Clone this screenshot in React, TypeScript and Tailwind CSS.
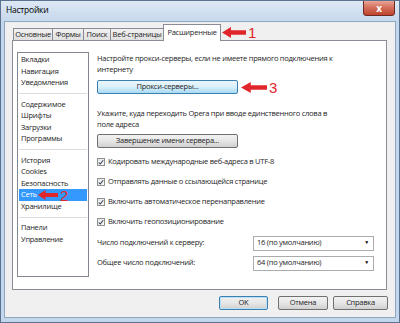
import React from 'react';

const listGroups: string[][] = [
    ['Вкладки', 'Навигация', 'Уведомления'],
    ['Содержимое', 'Шрифты', 'Загрузки', 'Программы'],
    ['История', 'Cookies', 'Безопасность', 'Сеть', 'Хранилище'],
    ['Панели', 'Управление'],
];

const tabs = [
    { label: 'Основные', w: 'w-[40px]' },
    { label: 'Формы', w: 'w-[32px]' },
    { label: 'Поиск', w: 'w-[28px]' },
    { label: 'Веб-страницы', w: 'w-[54px]' },
];

const checks = [
    'Кодировать международные веб-адреса в UTF-8',
    'Отправлять данные о ссылающейся странице',
    'Включить автоматическое перенаправление',
    'Включить геопозиционирование',
];

const Arrow = ({ className }: { className: string }) => (
    <svg className={className} viewBox="0 0 24 12" preserveAspectRatio="none">
        <path d="M0 6 L9 0 L9 3.5 L24 3.5 L24 8.5 L9 8.5 L9 12 Z" fill="#e1262b" />
    </svg>
);

const Checkbox = () => (
    <span className="w-[8px] h-[8px] border border-[#8e8f8f] bg-gradient-to-br from-[#e6e6e6] to-[#fafafa] flex items-center justify-center shrink-0">
        <svg viewBox="0 0 8 8" className="w-[7px] h-[7px]">
            <path d="M1 4 L3 6 L7 1" fill="none" stroke="#2d3c57" strokeWidth="1.4" />
        </svg>
    </span>
);

const Select = ({ value }: { value: string }) => (
    <div className="w-[121px] h-[15px] border border-[#acacac] bg-white flex items-center justify-between pl-[3px] pr-[4px]">
        <span>{value}</span>
        <span className="text-[5px] text-black">▼</span>
    </div>
);

export default function App() {
    return (
        <div className="relative w-[400px] h-[323px] overflow-hidden bg-[#c2d6ec] border border-[#5d7290] flex flex-col font-['Open_Sans',sans-serif] text-[7.5px] tracking-[-0.25px] text-[#1e1e1e]">
            {/* title bar */}
            <div className="h-[20px] flex items-start justify-between bg-gradient-to-b from-[#dde8f4] to-[#c6d8ec]">
                <span className="pl-[5px] pt-[3px] text-[8.5px] text-black">Настройки</span>
                <div className="mr-[4px] w-[32px] h-[16px] -mt-px rounded-b-[3px] border border-[#6d2a22] bg-gradient-to-b from-[#e8a597] via-[#d26b57] to-[#c0422c] flex items-center justify-center">
                    <span className="text-white text-[10px] font-bold leading-none">x</span>
                </div>
            </div>

            {/* client */}
            <div className="flex-1 mx-[3px] mb-[4px] bg-[#f0f0f0] border border-[#91a6c0] flex flex-col">
                <div className="h-[18px] pl-[8px] flex items-end">
                    {tabs.map((t, i) => (
                        <div
                            key={t.label}
                            className={`${t.w} h-[12px] ${i > 0 ? '-ml-px' : ''} border border-b-0 border-[#898c95] bg-gradient-to-b from-[#f2f2f2] to-[#e0e0e0] flex items-center justify-center whitespace-nowrap`}
                        >
                            {t.label}
                        </div>
                    ))}
                    <div className="relative z-10 -ml-px -mb-px w-[58px] h-[17px] border border-b-0 border-[#898c95] bg-white flex items-center justify-center whitespace-nowrap">
                        Расширенные
                    </div>
                </div>

                <div className="ml-[7px] mr-[8px] h-[250px] bg-white border border-[#898c95] flex pt-[11px]">
                    {/* left list */}
                    <div className="ml-[4px] w-[72px] h-[225px] border border-[#828790] bg-white py-px px-px">
                        {listGroups.map((group, gi) => (
                            <div key={gi}>
                                {gi > 0 && (
                                    <div className="h-[10px] flex items-center">
                                        <div className="w-full border-t border-[#dcdcdc]" />
                                    </div>
                                )}
                                {group.map(item => (
                                    <div
                                        key={item}
                                        className={`h-[11.5px] leading-[11.5px] pl-[2px] whitespace-nowrap ${item === 'Сеть' ? 'bg-[#3399ff] text-white' : ''}`}
                                    >
                                        {item}
                                    </div>
                                ))}
                            </div>
                        ))}
                    </div>

                    {/* right side */}
                    <div className="ml-[8px] pt-px flex flex-col whitespace-nowrap">
                        <p className="leading-[11px]">
                            Настройте прокси-серверы, если не имеете прямого подключения к<br />интернету
                        </p>
                        <div className="mt-[5px] w-[141px] h-[14px] rounded-[2px] border border-[#3c7fb1] bg-gradient-to-b from-[#eaf6fd] via-[#d9f0fc] to-[#a7d9f5] flex items-center justify-center">
                            Прокси-серверы...
                        </div>
                        <p className="mt-[13.5px] leading-[11px]">
                            Укажите, куда переходить Opera при вводе единственного слова в<br />поле адреса
                        </p>
                        <div className="mt-[4.5px] w-[141px] h-[14px] rounded-[2px] border border-[#707070] bg-gradient-to-b from-[#f2f2f2] via-[#e6e6e6] to-[#d0d0d0] flex items-center justify-center">
                            Завершение имени сервера...
                        </div>
                        <div className="mt-[8.5px] flex flex-col gap-[9px]">
                            {checks.map(c => (
                                <div key={c} className="h-[11px] flex items-center gap-[3px]">
                                    <Checkbox />
                                    <span>{c}</span>
                                </div>
                            ))}
                        </div>
                        <div className="mt-[8px] flex items-center h-[15px]">
                            <span className="w-[156px]">Число подключений к серверу:</span>
                            <Select value="16 (по умолчанию)" />
                        </div>
                        <div className="mt-[5px] flex items-center h-[15px]">
                            <span className="w-[156px]">Общее число подключений:</span>
                            <Select value="64 (по умолчанию)" />
                        </div>
                    </div>
                </div>

                {/* dialog buttons */}
                <div className="mt-[6px] mr-[7px] flex justify-end">
                    <div className="w-[49px] h-[14px] rounded-[2px] border border-[#3c7fb1] bg-gradient-to-b from-[#f2f2f2] via-[#e6e6e6] to-[#d0d0d0] flex items-center justify-center shadow-[inset_0_0_0_1px_#b9e0f7]">
                        OK
                    </div>
                    <div className="ml-[10px] w-[50px] h-[14px] rounded-[2px] border border-[#707070] bg-gradient-to-b from-[#f2f2f2] via-[#e6e6e6] to-[#d0d0d0] flex items-center justify-center">
                        Отмена
                    </div>
                    <div className="ml-[5px] w-[55px] h-[14px] rounded-[2px] border border-[#707070] bg-gradient-to-b from-[#f2f2f2] via-[#e6e6e6] to-[#d0d0d0] flex items-center justify-center">
                        Справка
                    </div>
                </div>
            </div>

            {/* red annotations */}
            <Arrow className="absolute left-[221px] top-[26px] w-[24px] h-[11px]" />
            <span className="absolute left-[247px] top-[25px] text-[15px] leading-[13px] tracking-normal text-[#e1262b] font-['Liberation_Sans',sans-serif]">1</span>
            <Arrow className="absolute left-[37px] top-[189px] w-[20px] h-[10px]" />
            <span className="absolute left-[59px] top-[188px] text-[15px] leading-[13px] tracking-normal text-[#e1262b] font-['Liberation_Sans',sans-serif]">2</span>
            <Arrow className="absolute left-[240px] top-[81px] w-[26px] h-[11px]" />
            <span className="absolute left-[268px] top-[80px] text-[15px] leading-[13px] tracking-normal text-[#e1262b] font-['Liberation_Sans',sans-serif]">3</span>
        </div>
    );
}
